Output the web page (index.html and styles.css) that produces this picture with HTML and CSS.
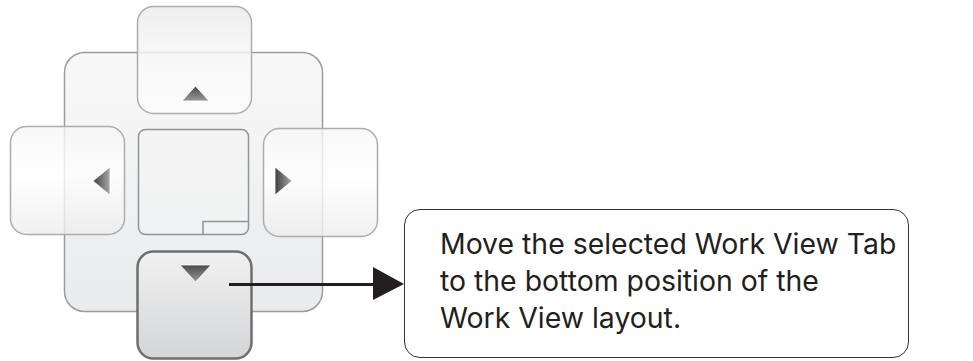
FILE: index.html
```html
<!DOCTYPE html>
<html>
<head>
<meta charset="utf-8">
<link rel="stylesheet" href="styles.css">
</head>
<body>
<div class="page">
  <svg class="pad" width="404" height="361" viewBox="0 0 404 361" xmlns="http://www.w3.org/2000/svg">
    <defs>
      <linearGradient id="gBase" x1="0" y1="0" x2="0" y2="1">
        <stop offset="0" stop-color="#f8f8f8"/>
        <stop offset="1" stop-color="#e9ebed"/>
      </linearGradient>
      <linearGradient id="gTop" x1="0" y1="0" x2="0" y2="1">
        <stop offset="0" stop-color="#ebebeb" stop-opacity="0.85"/>
        <stop offset="0.6" stop-color="#fafafa" stop-opacity="0.8"/>
        <stop offset="1" stop-color="#fcfcfc" stop-opacity="0.8"/>
      </linearGradient>
      <linearGradient id="gSide" x1="0" y1="0" x2="0" y2="1">
        <stop offset="0" stop-color="#f6f6f6" stop-opacity="0.8"/>
        <stop offset="0.45" stop-color="#ffffff" stop-opacity="0.8"/>
        <stop offset="1" stop-color="#ededed" stop-opacity="0.8"/>
      </linearGradient>
      <linearGradient id="gSel" x1="0" y1="0" x2="0" y2="1">
        <stop offset="0" stop-color="#f1f1f1"/>
        <stop offset="1" stop-color="#d4d5d7"/>
      </linearGradient>
      <linearGradient id="gCenter" x1="0" y1="0" x2="0" y2="1">
        <stop offset="0" stop-color="#f4f4f4"/>
        <stop offset="1" stop-color="#f0f1f2"/>
      </linearGradient>
      <linearGradient id="tV" x1="0" y1="0" x2="0" y2="1">
        <stop offset="0" stop-color="#4a4a4a"/>
        <stop offset="1" stop-color="#9a9a9a"/>
      </linearGradient>
      <linearGradient id="tH" x1="0" y1="0" x2="1" y2="0">
        <stop offset="0" stop-color="#3e3e3e"/>
        <stop offset="1" stop-color="#a8a8a8"/>
      </linearGradient>
    </defs>
    <rect x="64.5" y="52.5" width="258" height="259" rx="20" fill="url(#gBase)" stroke="#9c9c9c" stroke-width="1.5"/>
    <rect x="138.5" y="129.5" width="110" height="105" rx="7" fill="url(#gCenter)" stroke="#939393" stroke-width="1.5"/>
    <path d="M203 234 V221.5 H248.5" fill="none" stroke="#939393" stroke-width="1.5"/>
    <rect x="137.5" y="6.5" width="114" height="107" rx="16" fill="url(#gTop)" stroke="#adadad" stroke-width="1.5"/>
    <rect x="10.5" y="126.5" width="114" height="108" rx="16" fill="url(#gSide)" stroke="#adadad" stroke-width="1.5"/>
    <rect x="263.5" y="128.5" width="114" height="108" rx="16" fill="url(#gSide)" stroke="#adadad" stroke-width="1.5"/>
    <rect x="137.5" y="251.5" width="114" height="107" rx="16" fill="url(#gSel)" stroke="#6f6f6f" stroke-width="2.5"/>
    <polygon points="195.5,86 209,101 182,101" fill="url(#tV)" stroke="#ffffff" stroke-width="0.8"/>
    <polygon points="93,181 110,167 110,195" fill="url(#tH)" stroke="#ffffff" stroke-width="0.8"/>
    <polygon points="292,181 275,167 275,195" fill="url(#tH)" stroke="#ffffff" stroke-width="0.8"/>
    <polygon points="180,265 211,265 195.5,282" fill="url(#tV)" stroke="#ffffff" stroke-width="0.8"/>
    <line x1="229" y1="284.5" x2="378" y2="284.5" stroke="#231f20" stroke-width="3"/>
    <polygon points="373,267 404,284 373,300" fill="#231f20"/>
  </svg>
  <div class="callout">
    <p class="callout-text">Move the selected Work View Tab<br>to the bottom position of the<br>Work View layout.</p>
  </div>
</div>
</body>
</html>
```
FILE: styles.css
```css
html, body {
  margin: 0;
  padding: 0;
  background: #ffffff;
}
.page {
  display: flex;
  align-items: flex-start;
  width: 973px;
  height: 361px;
  overflow: hidden;
}
.pad {
  display: block;
  flex: none;
}
.callout {
  flex: none;
  box-sizing: border-box;
  width: 505px;
  height: 149px;
  margin-top: 209px;
  border: 1.5px solid #333333;
  border-radius: 16px;
  padding: 15px 10px 0 35px;
}
.callout-text {
  margin: 0;
  font-family: "Inter", "Open Sans", sans-serif;
  font-size: 28.4px;
  line-height: 37px;
  white-space: nowrap;
  color: #231f20;
}
```
